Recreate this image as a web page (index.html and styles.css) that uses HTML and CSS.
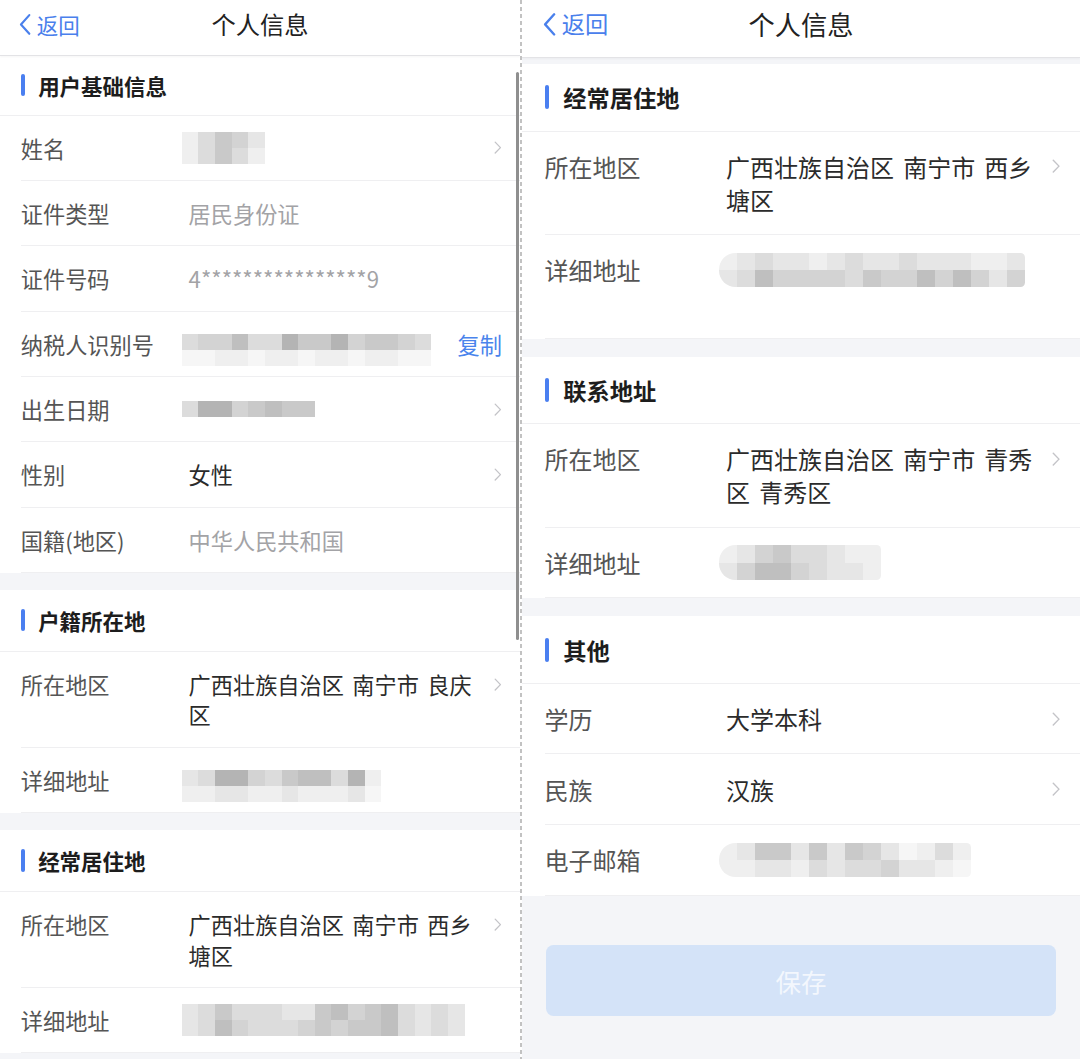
FILE: index.html
```html
<!DOCTYPE html>
<html lang="zh-CN">
<head>
    <meta charset="UTF-8">
    <meta name="viewport" content="width=device-width, initial-scale=1.0">
    <title>个人信息</title>
    <link rel="stylesheet" href="styles.css">
</head>
<body>
<div class="screens">

    <!-- left screen: top of the form -->
    <section class="phone phone-left">
        <header class="nav">
            <a class="back" href="#">
                <svg class="back-icon" viewBox="0 0 12 22"><path d="M10.5 1.5 L2 11 L10.5 20.5"/></svg>
                <span>返回</span>
            </a>
            <h1 class="nav-title">个人信息</h1>
            <span></span>
        </header>

        <div class="page">
            <div class="group">
                <div class="group-title">用户基础信息</div>
                <div class="row">
                    <span class="label">姓名</span>
                    <div class="value">
                        <div class="mosaic">
                            <div class="mrow"><i class="g"></i><i class="e"></i><i class="c"></i><i class="d"></i><i class="f"></i></div>
                            <div class="mrow"><i class="g"></i><i class="e"></i><i class="c"></i><i class="e"></i><i class="g"></i></div>
                        </div>
                    </div>
                    <span class="side"><svg class="arrow" viewBox="0 0 8 14"><path d="M1.2 1.2 L6.8 7 L1.2 12.8"/></svg></span>
                </div>
                <div class="row">
                    <span class="label">证件类型</span>
                    <div class="value muted">居民身份证</div>
                    <span class="side"></span>
                </div>
                <div class="row">
                    <span class="label">证件号码</span>
                    <div class="value muted">4****************9</div>
                    <span class="side"></span>
                </div>
                <div class="row">
                    <span class="label">纳税人识别号</span>
                    <div class="value">
                        <div class="mosaic drop">
                            <div class="mrow"><i class="e"></i><i class="d"></i><i class="d"></i><i class="b"></i><i class="e"></i><i class="e"></i><i class="a"></i><i class="c"></i><i class="c"></i><i class="a"></i><i class="d"></i><i class="c"></i><i class="c"></i><i class="d"></i><i class="e"></i></div>
                            <div class="mrow"><i class="h"></i><i class="h"></i><i class="g"></i><i class="g"></i><i class="h"></i><i class="g"></i><i class="g"></i><i class="h"></i><i class="g"></i><i class="g"></i><i class="h"></i><i class="g"></i><i class="g"></i><i class="h"></i><i class="h"></i></div>
                        </div>
                    </div>
                    <span class="side copy">复制</span>
                </div>
                <div class="row">
                    <span class="label">出生日期</span>
                    <div class="value">
                        <div class="mosaic single">
                            <div class="mrow"><i class="e"></i><i class="a"></i><i class="a"></i><i class="d"></i><i class="c"></i><i class="b"></i><i class="c"></i><i class="c"></i></div>
                        </div>
                    </div>
                    <span class="side"><svg class="arrow" viewBox="0 0 8 14"><path d="M1.2 1.2 L6.8 7 L1.2 12.8"/></svg></span>
                </div>
                <div class="row">
                    <span class="label">性别</span>
                    <div class="value">女性</div>
                    <span class="side"><svg class="arrow" viewBox="0 0 8 14"><path d="M1.2 1.2 L6.8 7 L1.2 12.8"/></svg></span>
                </div>
                <div class="row">
                    <span class="label">国籍(地区)</span>
                    <div class="value muted">中华人民共和国</div>
                    <span class="side"></span>
                </div>
            </div>

            <div class="group">
                <div class="group-title">户籍所在地</div>
                <div class="row">
                    <span class="label">所在地区</span>
                    <div class="value">广西壮族自治区 南宁市 良庆区</div>
                    <span class="side"><svg class="arrow" viewBox="0 0 8 14"><path d="M1.2 1.2 L6.8 7 L1.2 12.8"/></svg></span>
                </div>
                <div class="row">
                    <span class="label">详细地址</span>
                    <div class="value">
                        <div class="mosaic drop">
                            <div class="mrow"><i class="f"></i><i class="e"></i><i class="a"></i><i class="a"></i><i class="d"></i><i class="e"></i><i class="c"></i><i class="b"></i><i class="b"></i><i class="e"></i><i class="a"></i><i class="g"></i></div>
                            <div class="mrow"><i class="g"></i><i class="g"></i><i class="f"></i><i class="f"></i><i class="g"></i><i class="g"></i><i class="f"></i><i class="g"></i><i class="g"></i><i class="g"></i><i class="f"></i><i class="h"></i></div>
                        </div>
                    </div>
                    <span class="side"></span>
                </div>
            </div>

            <div class="group">
                <div class="group-title">经常居住地</div>
                <div class="row">
                    <span class="label">所在地区</span>
                    <div class="value">广西壮族自治区 南宁市 西乡塘区</div>
                    <span class="side"><svg class="arrow" viewBox="0 0 8 14"><path d="M1.2 1.2 L6.8 7 L1.2 12.8"/></svg></span>
                </div>
                <div class="row">
                    <span class="label">详细地址</span>
                    <div class="value">
                        <div class="mosaic">
                            <div class="mrow"><i class="f"></i><i class="e"></i><i class="c"></i><i class="e"></i><i class="e"></i><i class="e"></i><i class="f"></i><i class="f"></i><i class="c"></i><i class="b"></i><i class="d"></i><i class="c"></i><i class="b"></i><i class="e"></i><i class="f"></i><i class="e"></i><i class="f"></i></div>
                            <div class="mrow"><i class="f"></i><i class="e"></i><i class="b"></i><i class="d"></i><i class="e"></i><i class="e"></i><i class="e"></i><i class="d"></i><i class="c"></i><i class="d"></i><i class="c"></i><i class="c"></i><i class="b"></i><i class="e"></i><i class="f"></i><i class="e"></i><i class="f"></i></div>
                        </div>
                    </div>
                    <span class="side"></span>
                </div>
            </div>
        </div>

        <div class="scrollbar"></div>
    </section>

    <div class="divider"></div>

    <!-- right screen: scrolled to the bottom -->
    <section class="phone phone-right">
        <header class="nav">
            <a class="back" href="#">
                <svg class="back-icon" viewBox="0 0 12 22"><path d="M10.5 1.5 L2 11 L10.5 20.5"/></svg>
                <span>返回</span>
            </a>
            <h1 class="nav-title">个人信息</h1>
            <span></span>
        </header>

        <div class="page">
            <div class="group">
                <div class="group-title">经常居住地</div>
                <div class="row">
                    <span class="label">所在地区</span>
                    <div class="value">广西壮族自治区 南宁市 西乡塘区</div>
                    <span class="side"><svg class="arrow" viewBox="0 0 8 14"><path d="M1.2 1.2 L6.8 7 L1.2 12.8"/></svg></span>
                </div>
                <div class="row tall">
                    <span class="label">详细地址</span>
                    <div class="value">
                        <div class="mosaic round">
                            <div class="mrow"><i class="g"></i><i class="f"></i><i class="e"></i><i class="f"></i><i class="f"></i><i class="g"></i><i class="f"></i><i class="e"></i><i class="f"></i><i class="f"></i><i class="e"></i><i class="f"></i><i class="f"></i><i class="f"></i><i class="g"></i><i class="g"></i><i class="f"></i></div>
                            <div class="mrow"><i class="f"></i><i class="e"></i><i class="b"></i><i class="d"></i><i class="d"></i><i class="d"></i><i class="d"></i><i class="e"></i><i class="c"></i><i class="d"></i><i class="d"></i><i class="b"></i><i class="d"></i><i class="b"></i><i class="d"></i><i class="f"></i><i class="d"></i></div>
                        </div>
                    </div>
                    <span class="side"></span>
                </div>
            </div>

            <div class="group">
                <div class="group-title">联系地址</div>
                <div class="row">
                    <span class="label">所在地区</span>
                    <div class="value">广西壮族自治区 南宁市 青秀区 青秀区</div>
                    <span class="side"><svg class="arrow" viewBox="0 0 8 14"><path d="M1.2 1.2 L6.8 7 L1.2 12.8"/></svg></span>
                </div>
                <div class="row">
                    <span class="label">详细地址</span>
                    <div class="value">
                        <div class="mosaic round">
                            <div class="mrow"><i class="g"></i><i class="f"></i><i class="d"></i><i class="c"></i><i class="e"></i><i class="e"></i><i class="f"></i><i class="g"></i><i class="g"></i></div>
                            <div class="mrow"><i class="f"></i><i class="d"></i><i class="b"></i><i class="b"></i><i class="d"></i><i class="e"></i><i class="f"></i><i class="f"></i><i class="g"></i></div>
                        </div>
                    </div>
                    <span class="side"></span>
                </div>
            </div>

            <div class="group">
                <div class="group-title">其他</div>
                <div class="row">
                    <span class="label">学历</span>
                    <div class="value">大学本科</div>
                    <span class="side"><svg class="arrow" viewBox="0 0 8 14"><path d="M1.2 1.2 L6.8 7 L1.2 12.8"/></svg></span>
                </div>
                <div class="row">
                    <span class="label">民族</span>
                    <div class="value">汉族</div>
                    <span class="side"><svg class="arrow" viewBox="0 0 8 14"><path d="M1.2 1.2 L6.8 7 L1.2 12.8"/></svg></span>
                </div>
                <div class="row">
                    <span class="label">电子邮箱</span>
                    <div class="value">
                        <div class="mosaic round">
                            <div class="mrow"><i class="g"></i><i class="f"></i><i class="c"></i><i class="c"></i><i class="f"></i><i class="c"></i><i class="f"></i><i class="c"></i><i class="d"></i><i class="f"></i><i class="h"></i><i class="g"></i><i class="e"></i><i class="g"></i></div>
                            <div class="mrow"><i class="g"></i><i class="g"></i><i class="f"></i><i class="f"></i><i class="g"></i><i class="e"></i><i class="f"></i><i class="e"></i><i class="e"></i><i class="d"></i><i class="f"></i><i class="f"></i><i class="g"></i><i class="h"></i></div>
                        </div>
                    </div>
                    <span class="side"></span>
                </div>
            </div>

            <div class="actions">
                <button class="save" disabled>保存</button>
            </div>
        </div>
    </section>

</div>
</body>
</html>
```

FILE: styles.css
```css
body {
    margin: 0;
    width: 1080px;
    height: 1059px;
    overflow: hidden;
    background: #fff;
    font-family: "Noto Sans CJK SC", "Noto Sans", sans-serif;
    color: #333;
}
.screens {
    display: flex;
    height: 1059px;
}

/* each screen is drawn in phone points, --u is the px size of one point */
.phone {
    position: relative;
    overflow: hidden;
    background: #f4f5f8;
    font-size: calc(16 * var(--u));
}
.phone-left {
    --u: 1.387px;
    --nav-h: 56px;
    --nav-pb: 6px;
    width: 520px;
    flex: none;
}
.phone-right {
    --u: 1.5px;
    --nav-h: 58px;
    --nav-pb: 9px;
    flex: 1;
}
.divider {
    width: 2px;
    flex: none;
    background: repeating-linear-gradient(to bottom, #c2c2c2 0 4px, #fff 4px 7px);
}
.scrollbar {
    position: absolute;
    top: 72px;
    right: 1px;
    width: 3px;
    height: 568px;
    border-radius: 2px;
    background: #8f8f8f;
}

/* nav bar */
.nav {
    position: relative;
    z-index: 1;
    box-sizing: border-box;
    height: var(--nav-h);
    padding-bottom: var(--nav-pb);
    display: grid;
    grid-template-columns: 1fr auto 1fr;
    align-items: center;
    background: #fff;
    border-bottom: 1px solid #e3e3e6;
    box-shadow: 0 1px 2px rgba(0,0,0,0.04);
}
.back {
    display: flex;
    align-items: center;
    gap: calc(4 * var(--u));
    padding-left: calc(14 * var(--u));
    color: #4a80ec;
    text-decoration: none;
    font-size: calc(15.5 * var(--u));
    line-height: 1;
}
.back-icon {
    width: calc(8.5 * var(--u));
    height: calc(16.5 * var(--u));
    fill: none;
    stroke: #4a80ec;
    stroke-width: 2.2;
    stroke-linecap: round;
    stroke-linejoin: round;
}
.nav-title {
    margin: 0;
    font-size: calc(17.5 * var(--u));
    font-weight: normal;
    color: #222;
    line-height: 1;
}

/* form groups */
.phone-right .page {
    padding-top: 6px;
}
.group {
    background: #fff;
    margin-bottom: calc(12 * var(--u));
}
.group-title {
    box-sizing: border-box;
    height: calc(45 * var(--u));
    display: flex;
    align-items: center;
    padding-left: calc(15 * var(--u));
    border-bottom: 1px solid #efeff1;
    font-size: calc(15.5 * var(--u));
    font-weight: bold;
    color: #1d1d1d;
}
.phone-left .group:first-child .group-title {
    height: calc(43 * var(--u));
}
.group-title::before {
    content: "";
    width: calc(3 * var(--u));
    height: calc(16 * var(--u));
    margin-right: calc(9.5 * var(--u));
    border-radius: calc(2 * var(--u));
    background: #4a7ff0;
}
.row {
    display: flex;
    align-items: flex-start;
    margin-left: calc(15 * var(--u));
    padding: calc(12.2 * var(--u)) calc(13 * var(--u)) calc(12.2 * var(--u)) 0;
    border-bottom: 1px solid #efeff1;
    line-height: calc(22 * var(--u));
}
.row.tall .value {
    min-height: calc(44 * var(--u));
}
.label {
    width: calc(121 * var(--u));
    flex: none;
    color: #555;
}
.value {
    flex: 1;
    min-width: 0;
    color: #2b2b2b;
    word-spacing: calc(2.5 * var(--u));
}
.value.muted {
    color: #a3a3a6;
}
.side {
    flex: none;
    min-width: calc(15 * var(--u));
    height: calc(22 * var(--u));
    display: flex;
    align-items: center;
    justify-content: flex-end;
}
.side.copy {
    color: #4a84ec;
}
.arrow {
    width: calc(5.5 * var(--u));
    height: calc(9.5 * var(--u));
    fill: none;
    stroke: #c4c4c8;
    stroke-width: 1.4;
    stroke-linecap: round;
    stroke-linejoin: round;
}

/* blurred values: drawn over the line box without changing the row height */
.mosaic {
    display: flex;
    flex-direction: column;
    width: max-content;
    margin: calc(-0.5 * var(--u)) 0 calc(-0.5 * var(--u)) calc(-5 * var(--u));
    overflow: hidden;
}
.mosaic.drop {
    margin-top: calc(4 * var(--u));
    margin-bottom: calc(-5 * var(--u));
}
.mosaic.single {
    margin-top: calc(5.25 * var(--u));
    margin-bottom: calc(5.25 * var(--u));
}
.mosaic.round {
    border-radius: calc(11 * var(--u)) calc(3 * var(--u)) calc(3 * var(--u)) calc(11 * var(--u));
}
.mrow {
    display: flex;
}
.mrow i {
    width: calc(12 * var(--u));
    height: calc(11.5 * var(--u));
}
.mrow .a { background: #b4b4b4; }
.mrow .b { background: #bfbfbf; }
.mrow .c { background: #c9c9c9; }
.mrow .d { background: #d3d3d3; }
.mrow .e { background: #dcdcdc; }
.mrow .f { background: #e6e6e6; }
.mrow .g { background: #efefef; }
.mrow .h { background: #f6f6f6; }

/* save button */
.actions {
    padding: calc(21 * var(--u)) calc(16 * var(--u));
}
.save {
    width: 100%;
    height: calc(47 * var(--u));
    border: none;
    border-radius: calc(5 * var(--u));
    background: #d4e3f8;
    color: #f3f7fd;
    font-family: inherit;
    font-size: calc(17 * var(--u));
}
```
